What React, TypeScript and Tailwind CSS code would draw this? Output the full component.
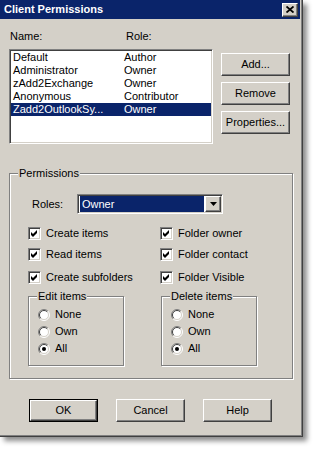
import React from "react";

const raised =
  "border border-t-white border-l-white border-r-[#404040] border-b-[#404040] shadow-[inset_-1px_-1px_0_#808080,inset_1px_1px_0_#d4d0c8]";
const sunken =
  "border border-t-[#808080] border-l-[#808080] border-r-white border-b-white shadow-[inset_1px_1px_0_#404040,inset_-1px_-1px_0_#d4d0c8]";
const etched = "border border-[#808080] shadow-[1px_1px_0_#fff,inset_1px_1px_0_#fff]";
const legend = "block w-fit -mt-[7px] ml-[8px] px-[1px] bg-[#d4d0c8] leading-[13px]";

const users = [
  { name: "Default", role: "Author" },
  { name: "Administrator", role: "Owner" },
  { name: "zAdd2Exchange", role: "Owner" },
  { name: "Anonymous", role: "Contributor" },
  { name: "Zadd2OutlookSy...", role: "Owner", selected: true },
];

const Button = ({ label, isDefault }: { label: string; isDefault?: boolean }) =>
  isDefault ? (
    <div className="w-[69px] h-[23px] border border-black">
      <div className={`w-full h-full flex items-center justify-center ${raised}`}>{label}</div>
    </div>
  ) : (
    <div className={`w-[69px] h-[23px] flex items-center justify-center ${raised}`}>{label}</div>
  );

const Checkbox = ({ label }: { label: string }) => (
  <div className="w-[133px] h-[13px] flex items-center">
    <div className={`w-[13px] h-[13px] bg-white ${sunken}`}>
      <svg width="11" height="11" viewBox="1 1 11 11">
        <polygon points="3,5 5,7 9,3 9,6 5,10 3,8" fill="#000" />
      </svg>
    </div>
    <span className="ml-[5px] leading-[13px]">{label}</span>
  </div>
);

const Radio = ({ label, checked }: { label: string; checked?: boolean }) => (
  <div className="h-[17px] flex items-center pl-[9px]">
    <svg width="12" height="12" viewBox="0 0 12 12">
      <circle cx="6" cy="6" r="5" fill="#fff" />
      <path d="M2.1 9.9 A5.5 5.5 0 0 1 9.9 2.1" stroke="#808080" fill="none" />
      <path d="M9.9 2.1 A5.5 5.5 0 0 1 2.1 9.9" stroke="#fff" fill="none" />
      <path d="M2.8 9.2 A4.5 4.5 0 0 1 9.2 2.8" stroke="#404040" fill="none" />
      <path d="M9.2 2.8 A4.5 4.5 0 0 1 2.8 9.2" stroke="#d4d0c8" fill="none" />
      {checked && <circle cx="6" cy="6" r="2" fill="#000" />}
    </svg>
    <span className="ml-[5px]">{label}</span>
  </div>
);

const SubGroup = ({ title }: { title: string }) => (
  <div className={`w-[96px] h-[70px] ${etched}`}>
    <span className={legend}>{title}</span>
    <div className="mt-[3px]">
      <Radio label="None" />
      <Radio label="Own" />
      <Radio label="All" checked />
    </div>
  </div>
);

export default function App() {
  return (
    <div
      className="w-[315px] h-[450px] bg-white text-[11px] text-black"
      style={{ fontFamily: '"Liberation Sans", Arial, sans-serif' }}
    >
      <div className="w-[303px] h-[437px] bg-[#d4d0c8] border-r border-b border-r-[#404040] border-b-[#404040] shadow-[4px_4px_5px_rgba(0,0,0,0.45)]">
        <div className="h-full border-r border-b border-r-[#808080] border-b-[#808080]">
          {/* title bar */}
          <div className="h-[19px] mr-[1px] bg-[#0a246a] flex items-center justify-between pl-[4px] pr-[2px]">
            <span className="text-white font-bold text-[11px]">Client Permissions</span>
            <div className={`w-[16px] h-[14px] bg-[#d4d0c8] flex items-center justify-center ${raised}`}>
              <svg width="8" height="7" viewBox="0 0 8 7">
                <path d="M0.5 0.5 L7.5 6.5 M7.5 0.5 L0.5 6.5" stroke="#000" strokeWidth="1.8" />
              </svg>
            </div>
          </div>

          <div className="pl-[9px]">
            <div className="flex items-start">
              <div className="w-[204px]">
                <div className="mt-[11px] flex h-[13px] leading-[13px]">
                  <span className="ml-[1px] w-[116px]">Name:</span>
                  <span>Role:</span>
                </div>
                <div className={`mt-[6px] h-[95px] bg-white pt-[1px] pl-[1px] pr-[1px] ${sunken}`}>
                  {users.map((u) => (
                    <div
                      key={u.name}
                      className={`flex h-[13px] leading-[13px] ${u.selected ? "bg-[#0a246a] text-white" : ""}`}
                    >
                      <span className="w-[113px] pl-[2px] whitespace-nowrap">{u.name}</span>
                      <span>{u.role}</span>
                    </div>
                  ))}
                </div>
              </div>
              <div className="ml-[8px] mt-[34px] flex flex-col gap-[6px]">
                <Button label="Add..." />
                <Button label="Remove" />
                <Button label="Properties..." />
              </div>
            </div>

            {/* permissions */}
            <div className={`mt-[29px] w-[284px] h-[206px] ${etched}`}>
              <span className={legend}>Permissions</span>
              <div className="mt-[14px] flex items-center h-[20px]">
                <span className="ml-[22px] w-[45px]">Roles:</span>
                <div className={`w-[146px] h-[20px] bg-white flex p-[1px] ${sunken}`}>
                  <div className="flex-1 bg-[#0a246a] text-white pl-[2px] leading-[16px] ml-[1px]">Owner</div>
                  <div className={`w-[16px] bg-[#d4d0c8] flex items-center justify-center ml-[1px] ${raised}`}>
                    <svg width="7" height="4" viewBox="0 0 7 4">
                      <polygon points="0,0 7,0 3.5,4" fill="#000" />
                    </svg>
                  </div>
                </div>
              </div>

              <div className="ml-[18px] mt-[13px]">
                <div className="flex">
                  <Checkbox label="Create items" />
                  <Checkbox label="Folder owner" />
                </div>
                <div className="flex mt-[8px]">
                  <Checkbox label="Read items" />
                  <Checkbox label="Folder contact" />
                </div>
                <div className="flex mt-[10px]">
                  <Checkbox label="Create subfolders" />
                  <Checkbox label="Folder Visible" />
                </div>
                <div className="flex mt-[12px] gap-[37px]">
                  <SubGroup title="Edit items" />
                  <SubGroup title="Delete items" />
                </div>
              </div>
            </div>

            <div className="mt-[20px] ml-[20px] flex gap-[18px]">
              <Button label="OK" isDefault />
              <Button label="Cancel" />
              <Button label="Help" />
            </div>
          </div>
        </div>
      </div>
    </div>
  );
}
